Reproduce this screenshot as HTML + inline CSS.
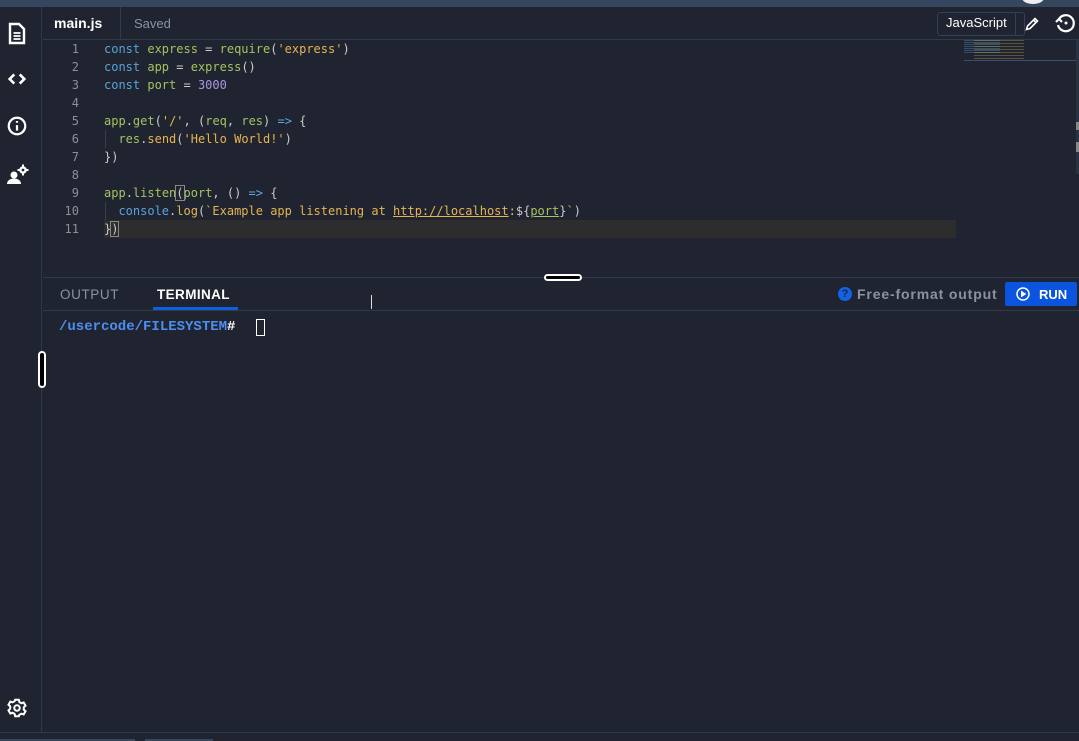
<!DOCTYPE html>
<html><head><style>
*{margin:0;padding:0;box-sizing:border-box}
body{width:1079px;height:741px;background:#1f2430;position:relative;overflow:hidden;font-family:"Liberation Sans",sans-serif}
.top{position:absolute;left:0;top:0;width:1079px;height:7px;background:#34475f}
.side{position:absolute;left:0;top:7px;width:42px;height:725px;border-right:1px solid #2b3a50}
.bot{position:absolute;left:0;top:732px;width:1079px;height:1px;background:#2b3a50}
.ic{position:absolute;left:6px}
.tabbar{position:absolute;left:43px;top:7px;width:1036px;height:33px;border-bottom:1px solid #2f3a4b}
.code{position:absolute;left:43px;top:39px;font-family:"DejaVu Sans Mono",monospace;font-size:12px;line-height:18px;color:#cbccc6}
.ln{position:absolute;width:36px;text-align:right;color:#8a8f99}
.cl{position:absolute;left:61px;white-space:pre}
.k{color:#59a3d8}.f{color:#a5c261}.s{color:#e6b450}.n{color:#a996e0}.o{color:#5fa8e0}
</style></head><body>
<div class="top"></div>
<div style="position:absolute;left:1022px;top:-8px;width:22px;height:12px;border-radius:50%;background:#eee"></div>
<div class="side">
<svg class="ic" style="top:14px" width="22" height="24" viewBox="0 0 22 24" fill="none" stroke="#fff" stroke-width="2.4"><path d="M4 3h9l5 5v14H4z"/><path d="M7.5 12h7M7.5 15h7M7.5 18h7" stroke-width="1.8"/></svg>
<svg class="ic" style="top:61px" width="22" height="22" viewBox="0 0 24 24" fill="none" stroke="#fff" stroke-width="2.8"><path d="M9 7l-5 5 5 5M15 7l5 5-5 5"/></svg>
<svg class="ic" style="top:108px" width="22" height="22" viewBox="0 0 24 24" fill="none" stroke="#fff" stroke-width="2.4"><circle cx="12" cy="12" r="9"/><path d="M12 11v6M12 6.5v2"/></svg>
<svg class="ic" style="top:156px" width="24" height="24" viewBox="0 0 24 24" fill="#fff"><circle cx="8" cy="12" r="3.5"/><path d="M1 21c0-4 4-5.5 7-5.5s7 1.5 7 5.5z"/><circle cx="17" cy="7" r="3.8"/><circle cx="17" cy="7" r="1.4" fill="#1f2430"/><path d="M16 1.5h2v2h-2zM16 10.5h2v2h-2zM11.5 6h2v2h-2zM20.5 6h2v2h-2z"/></svg>
<svg class="ic" style="top:690px" width="22" height="22" viewBox="0 0 24 24" fill="none" stroke="#fff" stroke-width="2.2"><circle cx="12" cy="12" r="3"/><path d="M10 3h4l.6 2.5 2.2 1.3 2.5-.8 2 3.5-1.9 1.7v2.6l1.9 1.7-2 3.5-2.5-.8-2.2 1.3L14 21h-4l-.6-2.5-2.2-1.3-2.5.8-2-3.5 1.9-1.7v-2.6L2.7 8.5l2-3.5 2.5.8 2.2-1.3z"/></svg>
</div>
<div class="tabbar">
<div style="position:absolute;left:0;top:0;width:78px;height:33px;border-right:1px solid #2f3a4b"></div>
<div style="position:absolute;left:11px;top:8px;color:#fff;font-weight:bold;font-size:14px">main.js</div>
<div style="position:absolute;left:91px;top:9px;color:#8a93a3;font-size:13px">Saved</div>
<div style="position:absolute;left:894px;top:5px;width:88px;height:24px;border:1px solid #33405a;border-radius:3px"></div>
<div style="position:absolute;left:972px;top:5px;width:1px;height:24px;background:#33405a"></div>
<div style="position:absolute;left:903px;top:8px;color:#fff;font-size:13px">JavaScript</div>
<svg style="position:absolute;left:981px;top:9px" width="16" height="16" viewBox="0 0 16 16" fill="none" stroke="#fff" stroke-width="1.6"><path d="M2.5 13.5l1-3.5 7.5-7.5 2.5 2.5-7.5 7.5z M9.5 4l2.5 2.5"/></svg>
<svg style="position:absolute;left:1010px;top:4px" width="24" height="24" viewBox="0 0 24 24" fill="none" stroke="#fff" stroke-width="2.2"><path d="M6 8a8 8 0 1 1 -1 6"/><path d="M3 11l3-3 3 3" /><circle cx="13" cy="12" r="1.5" fill="#fff" stroke="none"/></svg>
</div>
<div class="code">
<div style="position:absolute;left:61px;top:181px;width:852px;height:18px;background:#2d2d2d"></div>
<div class="ln" style="top:1px">1</div><div class="ln" style="top:19px">2</div><div class="ln" style="top:37px">3</div><div class="ln" style="top:55px">4</div><div class="ln" style="top:73px">5</div><div class="ln" style="top:91px">6</div><div class="ln" style="top:109px">7</div><div class="ln" style="top:127px">8</div><div class="ln" style="top:145px">9</div><div class="ln" style="top:163px">10</div><div class="ln" style="top:181px">11</div>
<div style="position:absolute;left:62px;top:91px;width:1px;height:18px;background:#3a3f4a"></div>
<div style="position:absolute;left:62px;top:163px;width:1px;height:18px;background:#3a3f4a"></div>
<div class="cl" style="top:1px"><span class="k">const</span> <span class="f">express</span> = <span class="f">require</span>(<span class="s">'express'</span>)</div>
<div class="cl" style="top:19px"><span class="k">const</span> <span class="f">app</span> = <span class="f">express</span>()</div>
<div class="cl" style="top:37px"><span class="k">const</span> <span class="f">port</span> = <span class="n">3000</span></div>
<div class="cl" style="top:73px"><span class="f">app</span>.<span class="f">get</span>(<span class="s">'/'</span>, (<span class="f">req</span>, <span class="f">res</span>) <span class="o">=&gt;</span> {</div>
<div class="cl" style="top:91px">  <span class="f">res</span>.<span class="s">send</span>(<span class="s">'Hello World!'</span>)</div>
<div class="cl" style="top:109px">})</div>
<div class="cl" style="top:145px"><span class="f">app</span>.<span class="f">listen</span><span style="outline:1px solid #888">(</span><span class="f">port</span>, () <span class="o">=&gt;</span> {</div>
<div class="cl" style="top:163px">  <span class="k">console</span>.<span class="s">log</span>(<span class="s">`Example app listening at <u>http://localhost</u>:</span>${<span class="f"><u>port</u></span>}<span class="s">`</span>)</div>
<div class="cl" style="top:181px">}<span style="outline:1px solid #888">)</span></div>
</div>
<div style="position:absolute;left:964px;top:40px;width:36px;height:13px;opacity:.35;background:repeating-linear-gradient(#59a3d8 0 1px,transparent 1px 2px)"></div>
<div style="position:absolute;left:974px;top:40px;width:50px;height:20px;opacity:.35;background:repeating-linear-gradient(#c9a84a 0 1px,transparent 1px 3px)"></div>
<div style="position:absolute;left:964px;top:60px;width:112px;height:1px;background:#3a5070"></div>
<div style="position:absolute;left:1076px;top:40px;width:3px;height:134px;background:#2a3344"></div>
<div style="position:absolute;left:1076px;top:122px;width:3px;height:8px;background:#888"></div>
<div style="position:absolute;left:1076px;top:142px;width:3px;height:10px;background:#888"></div>
<div style="position:absolute;left:43px;top:277px;width:1036px;height:1px;background:#2f3a4b"></div>
<div style="position:absolute;left:544px;top:274px;width:38px;height:7px;border:2px solid #fff;border-radius:4px;background:#000"></div>
<div style="position:absolute;left:43px;top:310px;width:1036px;height:1px;background:#2f3a4b"></div>
<div style="position:absolute;left:60px;top:287px;color:#8a93a3;font-size:13.5px;letter-spacing:0.6px">OUTPUT</div>
<div style="position:absolute;left:157px;top:287px;color:#fff;font-size:13.5px;font-weight:bold;letter-spacing:0.4px">TERMINAL</div>
<div style="position:absolute;left:153px;top:307px;width:85px;height:3px;background:#0f5fe0"></div>
<div style="position:absolute;left:838px;top:287px;width:14px;height:14px;border-radius:50%;background:#1162e6;color:#1f2430;font-size:11px;font-weight:bold;text-align:center;line-height:14px">?</div>
<div style="position:absolute;left:857px;top:286px;color:#8a93a3;font-size:14px;font-weight:bold;letter-spacing:0.85px">Free-format output</div>
<div style="position:absolute;left:1005px;top:282px;width:72px;height:24px;background:#0a54e0;border-radius:2px"></div>
<svg style="position:absolute;left:1016px;top:287px" width="14" height="14" viewBox="0 0 14 14" fill="none" stroke="#fff" stroke-width="1.5"><circle cx="7" cy="7" r="6"/><path d="M5.5 4.5v5l4-2.5z" fill="#fff" stroke-width="1"/></svg>
<div style="position:absolute;left:1039px;top:287px;color:#fff;font-size:13px;font-weight:bold">RUN</div>
<div style="position:absolute;left:59px;top:319px;font-family:'Liberation Mono',monospace;font-weight:bold;font-size:14px;color:#4d8ef0">/usercode/FILESYSTEM<span style="color:#fff"># </span></div>
<div style="position:absolute;left:256px;top:319px;width:9px;height:17px;border:1px solid #fff"></div>
<div style="position:absolute;left:38px;top:351px;width:8px;height:37px;border:2px solid #fff;border-radius:4px;background:#000"></div>
<div style="position:absolute;left:371px;top:295px;width:1px;height:14px;background:#ddd"></div>
<div class="bot"></div>
<div style="position:absolute;left:0;top:739px;width:135px;height:2px;background:#34475f"></div>
<div style="position:absolute;left:145px;top:739px;width:68px;height:2px;background:#34475f"></div>
</body></html>
